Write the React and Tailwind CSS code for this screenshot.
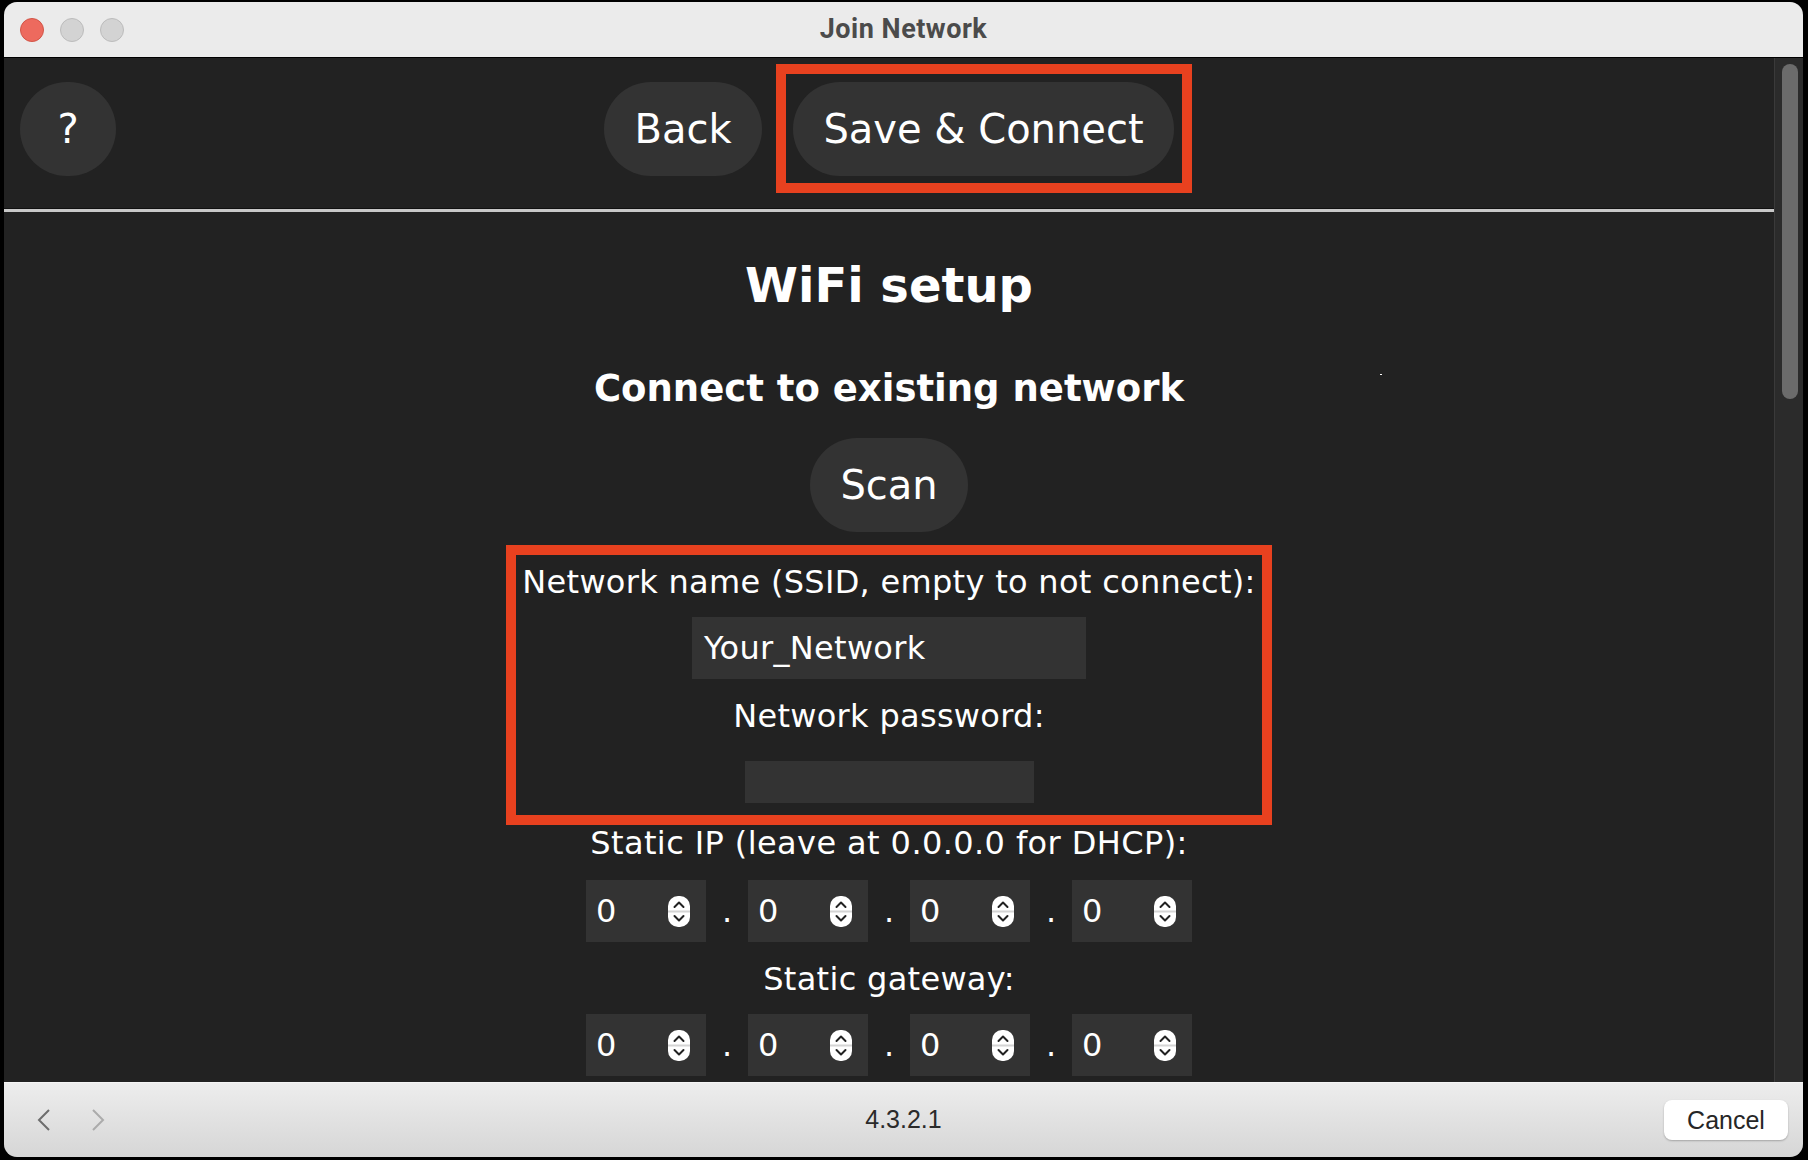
import React from 'react';

const Spinner = () => (
  <svg width="22" height="31" viewBox="0 0 22 31" className="shrink-0">
    <rect x="0" y="0" width="22" height="31" rx="10" fill="#ffffff" />
    <rect x="0" y="14.5" width="22" height="2" fill="#d4d4d4" />
    <path d="M6.5 11 L11 6.5 L15.5 11" fill="none" stroke="#222" strokeWidth="2" strokeLinecap="round" strokeLinejoin="round" />
    <path d="M6.5 20 L11 24.5 L15.5 20" fill="none" stroke="#222" strokeWidth="2" strokeLinecap="round" strokeLinejoin="round" />
  </svg>
);

const NumberBox = () => (
  <div className="w-[120px] h-[62px] bg-[#333333] flex items-center pl-[10px] pr-[16px]">
    <span className="flex-1 text-[32px] leading-[38px] text-white">0</span>
    <Spinner />
  </div>
);

const Dot = () => <span className="w-[42px] text-center text-[32px] leading-[38px] text-white">.</span>;

const IpRow = ({ className }) => (
  <div className={`flex items-center ${className}`}>
    <NumberBox />
    <Dot />
    <NumberBox />
    <Dot />
    <NumberBox />
    <Dot />
    <NumberBox />
  </div>
);

const PillButton = ({ children, className = '' }) => (
  <button className={`h-[94px] rounded-full bg-[#333333] text-white text-[40px] leading-none ${className}`}>
    {children}
  </button>
);

export default function App() {
  return (
    <div className="w-[1808px] h-[1160px] bg-black pt-[2px] pl-[4px] pr-[5px] pb-[3px] flex">
      <div className="flex-1 flex flex-col rounded-[13px] overflow-hidden bg-[#222222]">
        {/* title bar */}
        <div className="h-[56px] shrink-0 bg-[#ebebeb] border-b border-black grid grid-cols-[1fr_auto_1fr] items-center">
          <div className="flex items-center gap-[16px] pl-[16px]">
            <span className="w-[24px] h-[24px] rounded-full bg-[#ed6a5e] border border-[#d25547]" />
            <span className="w-[24px] h-[24px] rounded-full bg-[#d3d3d3] border border-[#bcbcbc]" />
            <span className="w-[24px] h-[24px] rounded-full bg-[#d3d3d3] border border-[#bcbcbc]" />
          </div>
          <div className="font-['Roboto',sans-serif] font-bold text-[27px] tracking-[0.5px] text-[#4b4b4b]">Join Network</div>
          <div />
        </div>

        <div className="flex-1 flex min-h-0">
          <div className="flex-1 min-w-0 flex flex-col overflow-hidden font-['DejaVu_Sans',sans-serif] text-white">
            {/* header */}
            <div className="h-[150px] shrink-0 grid grid-cols-[1fr_auto_1fr] items-start pt-[24px]">
              <div className="pl-[16px]">
                <PillButton className="w-[96px]">?</PillButton>
              </div>
              <div className="flex items-center gap-[31px]">
                <PillButton className="w-[158px]">Back</PillButton>
                <div className="relative">
                  <PillButton className="w-[381px]">Save &amp; Connect</PillButton>
                  <div className="absolute -left-[17px] -right-[18px] -top-[18px] -bottom-[17px] border-[10px] border-[#e8411f] pointer-events-none" />
                </div>
              </div>
              <div />
            </div>
            <div className="h-[1px] bg-[#111111] shrink-0" />
            <div className="h-[3px] bg-[#c8c8c8] shrink-0" />

            {/* content */}
            <div className="relative flex-1 flex flex-col items-center">
              <span className="absolute left-[1376px] top-[162px] w-[2px] h-[1px] bg-white" />
              <h1 className="mt-[45px] text-[48px] leading-[56px] font-bold">WiFi setup</h1>
              <h2 className="mt-[56px] text-[37px] leading-[40px] font-bold">Connect to existing network</h2>
              <PillButton className="mt-[29px] w-[158px] h-[93px]">Scan</PillButton>

              <div className="mt-[13px] w-[766px] border-[10px] border-[#e8411f] flex flex-col items-center pt-[8px] pb-[12px] text-[32px] leading-[38px] tracking-[0.3px]">
                <div>Network name (SSID, empty to not connect):</div>
                <div className="mt-[16px] w-[394px] h-[62px] bg-[#333333] flex items-center px-[12px]">
                  Your_Network
                </div>
                <div className="mt-[18px]">Network password:</div>
                <div className="mt-[26px] w-[289px] h-[42px] bg-[#333333]" />
              </div>

              <div className="-mt-[1px] text-[32px] leading-[38px] tracking-[0.4px]">Static IP (leave at 0.0.0.0 for DHCP):</div>
              <IpRow className="mt-[18px]" />
              <div className="mt-[18px] text-[32px] leading-[38px] tracking-[0.3px]">Static gateway:</div>
              <IpRow className="mt-[16px]" />
            </div>
          </div>

          {/* scrollbar */}
          <div className="w-[29px] shrink-0 bg-[#2b2b2b] border-l border-[#3a3a3a] pt-[6px] pl-[7px] pr-[5px]">
            <div className="w-[16px] h-[335px] rounded-full bg-[#6b6b6b]" />
          </div>
        </div>

        {/* bottom bar */}
        <div className="h-[75px] shrink-0 bg-gradient-to-b from-[#ededed] to-[#d6d6d6] border-t border-[#f5f5f5] grid grid-cols-[1fr_auto_1fr] items-center font-['Liberation_Sans',sans-serif]">
          <div className="flex items-center pl-[33px] gap-[42px]">
            <svg width="13" height="22" viewBox="0 0 13 22">
              <path d="M12 1 L2 11 L12 21" fill="none" stroke="#6d6d6d" strokeWidth="2" />
            </svg>
            <svg width="13" height="22" viewBox="0 0 13 22">
              <path d="M1 1 L11 11 L1 21" fill="none" stroke="#ababab" strokeWidth="2" />
            </svg>
          </div>
          <div className="text-[25px] text-[#2a2a2a]">4.3.2.1</div>
          <div className="flex justify-end pr-[15px]">
            <button className="w-[124px] h-[40px] rounded-[8px] bg-white shadow-[0_1px_2px_rgba(0,0,0,0.25)] text-[25px] leading-none text-[#262626]">
              Cancel
            </button>
          </div>
        </div>
      </div>
    </div>
  );
}
